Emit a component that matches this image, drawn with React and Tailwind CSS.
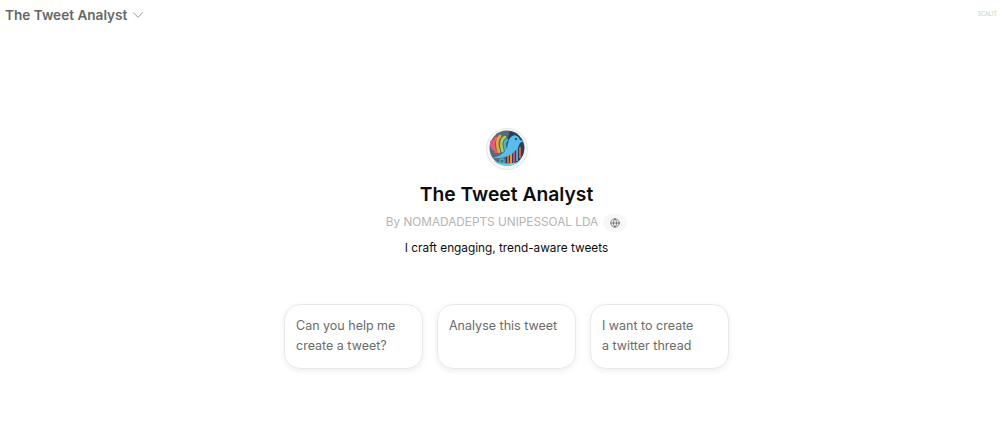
import { ChevronDown, Globe } from "lucide-react";

const prompts = [
  ["Can you help me", "create a tweet?"],
  ["Analyse this tweet"],
  ["I want to create", "a twitter thread"],
];

function Logo() {
  return (
    <svg width="42" height="42" viewBox="0 0 42 42" className="block">
      <circle cx="21" cy="21" r="20.5" fill="#f6f7f7" stroke="#e4e6e6" />
      <circle cx="21" cy="20" r="17.5" fill="#56687a" />
      <path d="M24 3 A17.5 17.5 0 0 1 30 35 L20 36 Q19 16 24 3Z" fill="#2c3f58" />
      <path d="M7 33 Q21 43 35 33 Q21 38 7 33Z" fill="#66d2e2" />
      <g fill="none" strokeWidth="2.6" strokeLinecap="round">
        <path d="M7 21 Q4 16 6 13" stroke="#d65aa8" />
        <path d="M10 24 Q5 15 10 10" stroke="#ef5d5d" />
        <path d="M13 24 Q9 13 14 8" stroke="#f2a53c" />
        <path d="M16.5 23 Q13 12 19 9" stroke="#a9cf4f" />
        <path d="M20 22 Q17 14 21 12" stroke="#3fb8c9" />
      </g>
      <g strokeWidth="1.7">
        <path d="M22 36 V24" stroke="#ef6a4a" />
        <path d="M25 36 V20" stroke="#f2b23c" />
        <path d="M28 35 V22" stroke="#e94f64" />
        <path d="M31 33 V18" stroke="#58b7e8" />
        <path d="M34 30 V19" stroke="#ef6a4a" />
      </g>
      <path
        d="M6 30 Q17 28 21 20 Q22 13 24 10 Q27 6 31 8 Q33 9 34 12 L38 13 L34 15 Q31 23 24 27 Q16 31 6 30Z"
        fill="#58bdec"
      />
      <circle cx="30" cy="11" r="1.1" fill="#16324d" />
      <circle cx="16" cy="33" r="2.2" fill="none" stroke="#45b6c9" strokeWidth="1.2" />
    </svg>
  );
}

export default function App() {
  return (
    <div className="flex flex-col w-full h-screen bg-white overflow-hidden font-['Inter',sans-serif]">
      <div className="flex justify-between items-start pl-[5px] pr-2 pt-[5px] h-[128px]">
        <div className="flex items-center gap-[2px] text-[#666666]">
          <span className="text-[13.6px] leading-[20px] font-semibold">The Tweet Analyst</span>
          <ChevronDown size={18} strokeWidth={1.2} className="text-[#8e8e8e]" />
        </div>
        <span className="mt-[6px] text-[5.5px] leading-[6px] text-[#c4cfc4]">SCALIT</span>
      </div>

      <div className="flex flex-col items-center pl-2">
        <Logo />
        <h1 className="mt-[10px] text-[19.3px] leading-[28px] font-semibold text-[#0d0d0d]">The Tweet Analyst</h1>
        <div className="mt-[6px] flex items-center gap-[5px] h-[18px]">
          <span className="text-[11.8px] text-[#b4b4b4]">By NOMADADEPTS UNIPESSOAL LDA</span>
          <span className="flex items-center justify-center w-6 h-[18px] rounded-full bg-[#f7f7f7]">
            <Globe size={10} strokeWidth={1.5} className="text-[#444]" />
          </span>
        </div>
        <p className="mt-[7px] text-[11.8px] leading-[18px] text-[#0d0d0d]">I craft engaging, trend-aware tweets</p>

        <div className="mt-[47px] flex gap-[14px]">
          {prompts.map((lines) => (
            <div
              key={lines[0]}
              className="w-[139px] h-[65px] px-[11px] pt-[11px] rounded-2xl border border-[#e8e8e8] shadow-[0_2px_6px_rgba(0,0,0,0.07)] text-[12.5px] leading-[19.5px] text-[#6b6b6b]"
            >
              {lines.map((l) => (
                <div key={l}>{l}</div>
              ))}
            </div>
          ))}
        </div>
      </div>
    </div>
  );
}
